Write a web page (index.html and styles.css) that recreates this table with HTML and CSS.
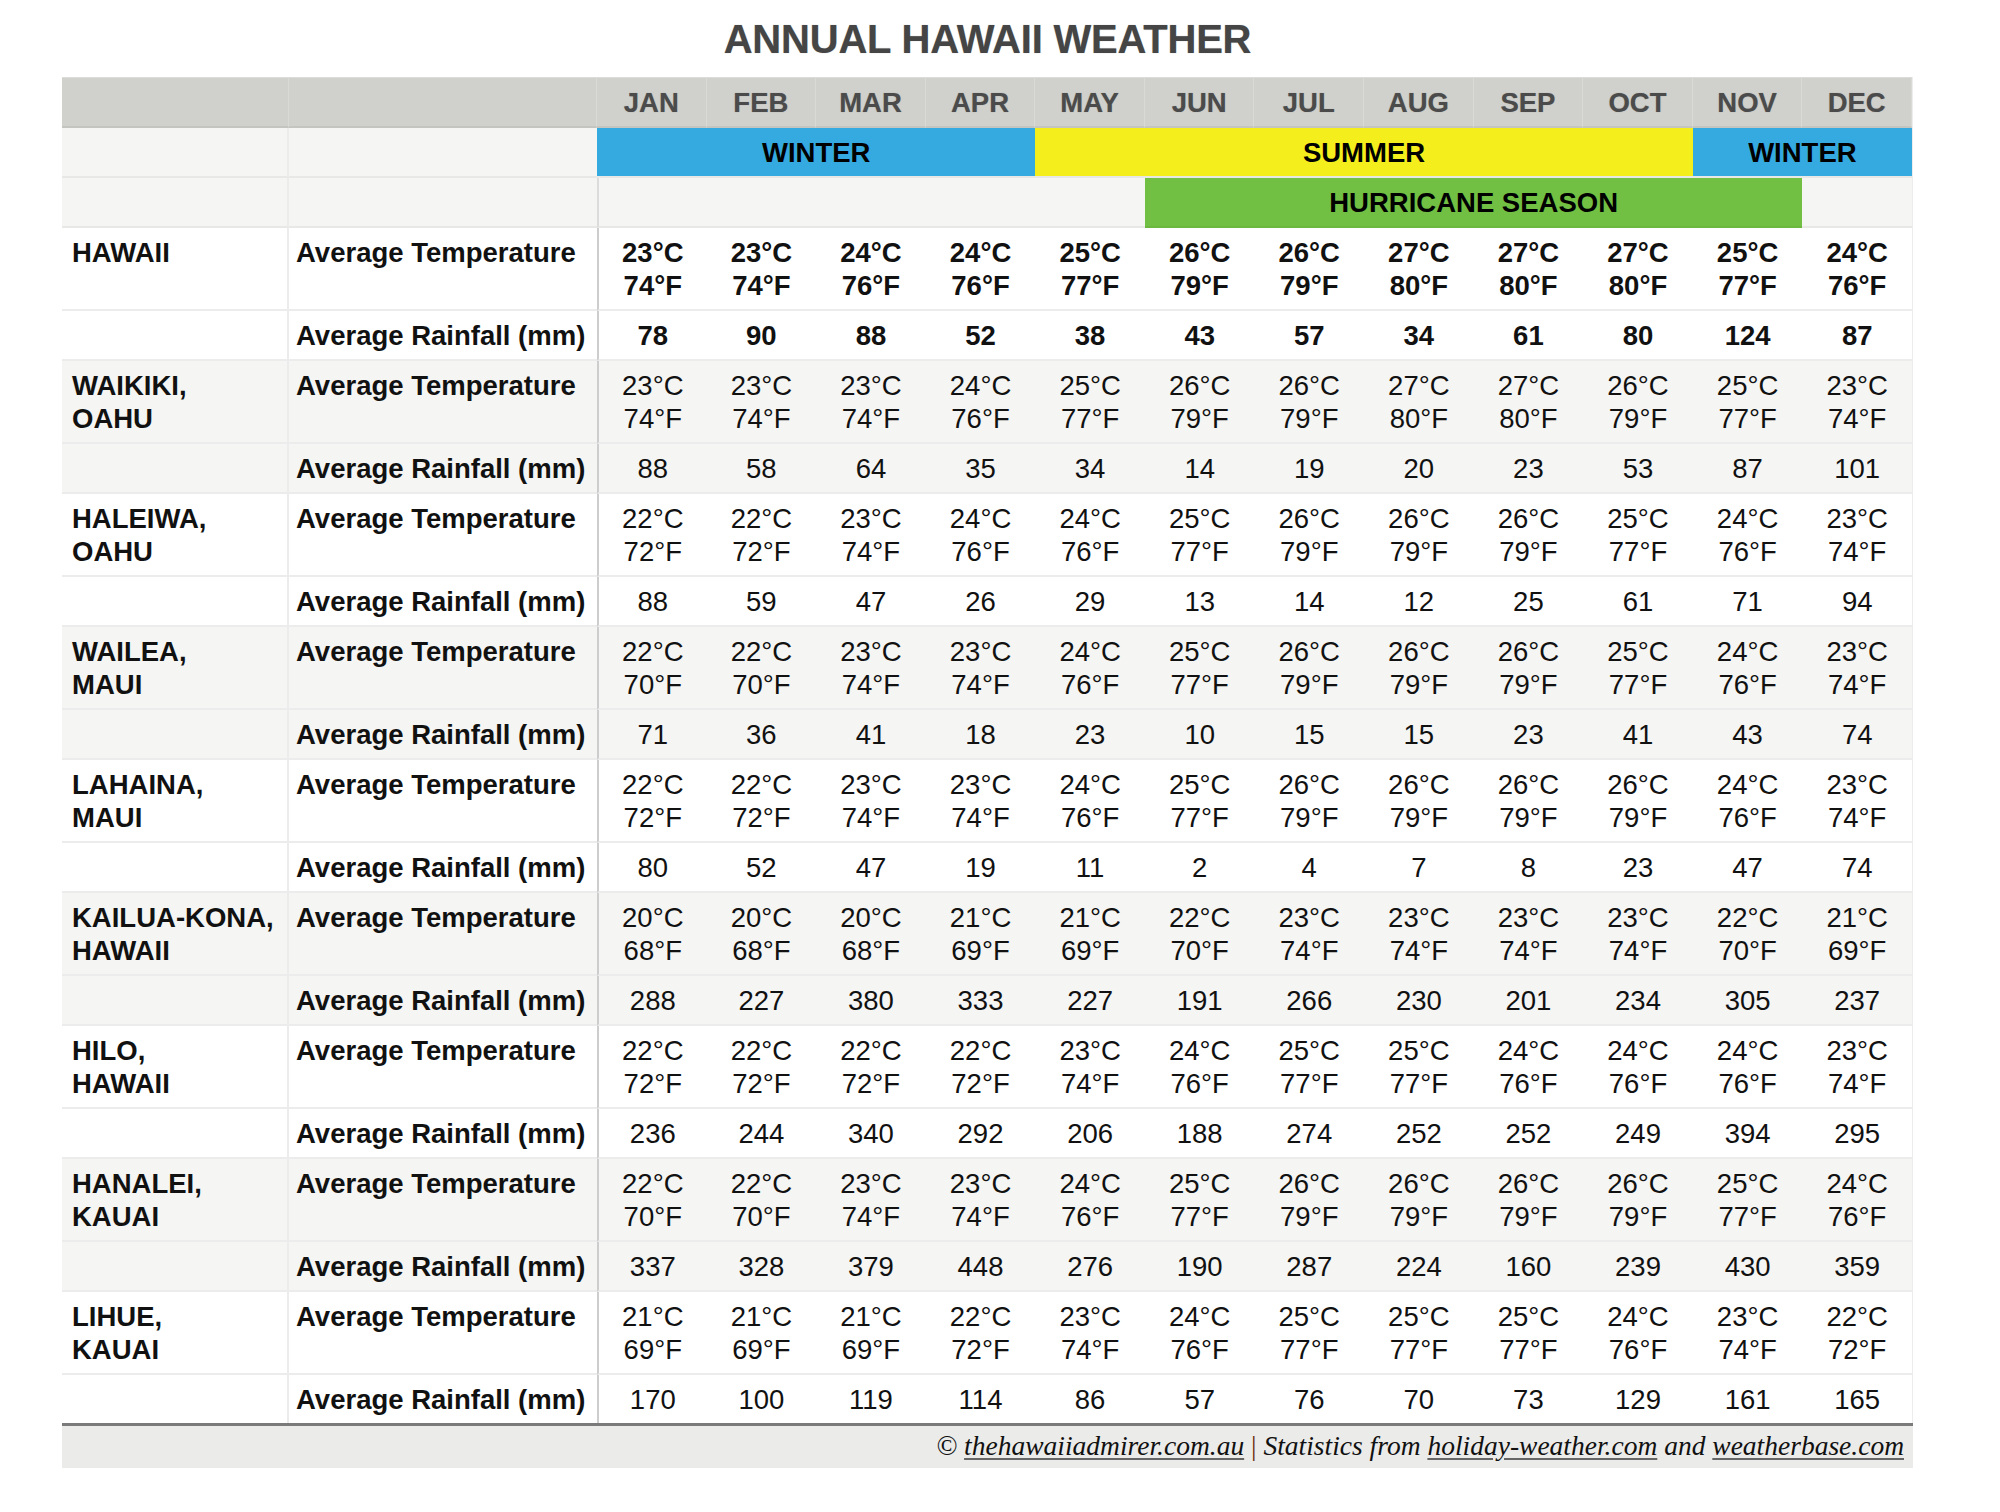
FILE: index.html
```html
<!DOCTYPE html>
<html lang="en">
<head>
<meta charset="utf-8">
<title>Annual Hawaii Weather</title>
<link rel="stylesheet" href="styles.css">
</head>
<body>
<div class="page">
  <h1 class="title">ANNUAL HAWAII WEATHER</h1>
  <table class="weather">
    <colgroup>
      <col class="c-loc"><col class="c-metric">
      <col><col><col><col><col><col><col><col><col><col><col><col>
    </colgroup>
    <thead>
      <tr class="months">
        <th></th><th></th>
        <th class="first">JAN</th><th>FEB</th><th>MAR</th><th>APR</th><th>MAY</th><th>JUN</th>
        <th>JUL</th><th>AUG</th><th>SEP</th><th>OCT</th><th>NOV</th><th>DEC</th>
      </tr>
      <tr class="band">
        <td class="loc"></td><td class="metric"></td>
        <td class="season winter" colspan="4">WINTER</td>
        <td class="season summer" colspan="6">SUMMER</td>
        <td class="season winter" colspan="2">WINTER</td>
      </tr>
      <tr class="band">
        <td class="loc"></td><td class="metric"></td>
        <td class="blank" colspan="5"></td>
        <td class="season hurricane" colspan="6">HURRICANE SEASON</td>
        <td class="blank end"></td>
      </tr>
    </thead>
    <tbody class="block strong">
      <tr>
        <td class="loc">HAWAII</td><td class="metric">Average Temperature</td>
        <td class="first">23°C<br>74°F</td><td>23°C<br>74°F</td><td>24°C<br>76°F</td><td>24°C<br>76°F</td><td>25°C<br>77°F</td><td>26°C<br>79°F</td><td>26°C<br>79°F</td><td>27°C<br>80°F</td><td>27°C<br>80°F</td><td>27°C<br>80°F</td><td>25°C<br>77°F</td><td>24°C<br>76°F</td>
      </tr>
      <tr>
        <td class="loc"></td><td class="metric">Average Rainfall (mm)</td>
        <td class="first">78</td><td>90</td><td>88</td><td>52</td><td>38</td><td>43</td><td>57</td><td>34</td><td>61</td><td>80</td><td>124</td><td>87</td>
      </tr>
    </tbody>
    <tbody class="block alt">
      <tr>
        <td class="loc">WAIKIKI,<br>OAHU</td><td class="metric">Average Temperature</td>
        <td class="first">23°C<br>74°F</td><td>23°C<br>74°F</td><td>23°C<br>74°F</td><td>24°C<br>76°F</td><td>25°C<br>77°F</td><td>26°C<br>79°F</td><td>26°C<br>79°F</td><td>27°C<br>80°F</td><td>27°C<br>80°F</td><td>26°C<br>79°F</td><td>25°C<br>77°F</td><td>23°C<br>74°F</td>
      </tr>
      <tr>
        <td class="loc"></td><td class="metric">Average Rainfall (mm)</td>
        <td class="first">88</td><td>58</td><td>64</td><td>35</td><td>34</td><td>14</td><td>19</td><td>20</td><td>23</td><td>53</td><td>87</td><td>101</td>
      </tr>
    </tbody>
    <tbody class="block">
      <tr>
        <td class="loc">HALEIWA,<br>OAHU</td><td class="metric">Average Temperature</td>
        <td class="first">22°C<br>72°F</td><td>22°C<br>72°F</td><td>23°C<br>74°F</td><td>24°C<br>76°F</td><td>24°C<br>76°F</td><td>25°C<br>77°F</td><td>26°C<br>79°F</td><td>26°C<br>79°F</td><td>26°C<br>79°F</td><td>25°C<br>77°F</td><td>24°C<br>76°F</td><td>23°C<br>74°F</td>
      </tr>
      <tr>
        <td class="loc"></td><td class="metric">Average Rainfall (mm)</td>
        <td class="first">88</td><td>59</td><td>47</td><td>26</td><td>29</td><td>13</td><td>14</td><td>12</td><td>25</td><td>61</td><td>71</td><td>94</td>
      </tr>
    </tbody>
    <tbody class="block alt">
      <tr>
        <td class="loc">WAILEA,<br>MAUI</td><td class="metric">Average Temperature</td>
        <td class="first">22°C<br>70°F</td><td>22°C<br>70°F</td><td>23°C<br>74°F</td><td>23°C<br>74°F</td><td>24°C<br>76°F</td><td>25°C<br>77°F</td><td>26°C<br>79°F</td><td>26°C<br>79°F</td><td>26°C<br>79°F</td><td>25°C<br>77°F</td><td>24°C<br>76°F</td><td>23°C<br>74°F</td>
      </tr>
      <tr>
        <td class="loc"></td><td class="metric">Average Rainfall (mm)</td>
        <td class="first">71</td><td>36</td><td>41</td><td>18</td><td>23</td><td>10</td><td>15</td><td>15</td><td>23</td><td>41</td><td>43</td><td>74</td>
      </tr>
    </tbody>
    <tbody class="block">
      <tr>
        <td class="loc">LAHAINA,<br>MAUI</td><td class="metric">Average Temperature</td>
        <td class="first">22°C<br>72°F</td><td>22°C<br>72°F</td><td>23°C<br>74°F</td><td>23°C<br>74°F</td><td>24°C<br>76°F</td><td>25°C<br>77°F</td><td>26°C<br>79°F</td><td>26°C<br>79°F</td><td>26°C<br>79°F</td><td>26°C<br>79°F</td><td>24°C<br>76°F</td><td>23°C<br>74°F</td>
      </tr>
      <tr>
        <td class="loc"></td><td class="metric">Average Rainfall (mm)</td>
        <td class="first">80</td><td>52</td><td>47</td><td>19</td><td>11</td><td>2</td><td>4</td><td>7</td><td>8</td><td>23</td><td>47</td><td>74</td>
      </tr>
    </tbody>
    <tbody class="block alt">
      <tr>
        <td class="loc">KAILUA-KONA,<br>HAWAII</td><td class="metric">Average Temperature</td>
        <td class="first">20°C<br>68°F</td><td>20°C<br>68°F</td><td>20°C<br>68°F</td><td>21°C<br>69°F</td><td>21°C<br>69°F</td><td>22°C<br>70°F</td><td>23°C<br>74°F</td><td>23°C<br>74°F</td><td>23°C<br>74°F</td><td>23°C<br>74°F</td><td>22°C<br>70°F</td><td>21°C<br>69°F</td>
      </tr>
      <tr>
        <td class="loc"></td><td class="metric">Average Rainfall (mm)</td>
        <td class="first">288</td><td>227</td><td>380</td><td>333</td><td>227</td><td>191</td><td>266</td><td>230</td><td>201</td><td>234</td><td>305</td><td>237</td>
      </tr>
    </tbody>
    <tbody class="block">
      <tr>
        <td class="loc">HILO,<br>HAWAII</td><td class="metric">Average Temperature</td>
        <td class="first">22°C<br>72°F</td><td>22°C<br>72°F</td><td>22°C<br>72°F</td><td>22°C<br>72°F</td><td>23°C<br>74°F</td><td>24°C<br>76°F</td><td>25°C<br>77°F</td><td>25°C<br>77°F</td><td>24°C<br>76°F</td><td>24°C<br>76°F</td><td>24°C<br>76°F</td><td>23°C<br>74°F</td>
      </tr>
      <tr>
        <td class="loc"></td><td class="metric">Average Rainfall (mm)</td>
        <td class="first">236</td><td>244</td><td>340</td><td>292</td><td>206</td><td>188</td><td>274</td><td>252</td><td>252</td><td>249</td><td>394</td><td>295</td>
      </tr>
    </tbody>
    <tbody class="block alt">
      <tr>
        <td class="loc">HANALEI,<br>KAUAI</td><td class="metric">Average Temperature</td>
        <td class="first">22°C<br>70°F</td><td>22°C<br>70°F</td><td>23°C<br>74°F</td><td>23°C<br>74°F</td><td>24°C<br>76°F</td><td>25°C<br>77°F</td><td>26°C<br>79°F</td><td>26°C<br>79°F</td><td>26°C<br>79°F</td><td>26°C<br>79°F</td><td>25°C<br>77°F</td><td>24°C<br>76°F</td>
      </tr>
      <tr>
        <td class="loc"></td><td class="metric">Average Rainfall (mm)</td>
        <td class="first">337</td><td>328</td><td>379</td><td>448</td><td>276</td><td>190</td><td>287</td><td>224</td><td>160</td><td>239</td><td>430</td><td>359</td>
      </tr>
    </tbody>
    <tbody class="block last">
      <tr>
        <td class="loc">LIHUE,<br>KAUAI</td><td class="metric">Average Temperature</td>
        <td class="first">21°C<br>69°F</td><td>21°C<br>69°F</td><td>21°C<br>69°F</td><td>22°C<br>72°F</td><td>23°C<br>74°F</td><td>24°C<br>76°F</td><td>25°C<br>77°F</td><td>25°C<br>77°F</td><td>25°C<br>77°F</td><td>24°C<br>76°F</td><td>23°C<br>74°F</td><td>22°C<br>72°F</td>
      </tr>
      <tr>
        <td class="loc"></td><td class="metric">Average Rainfall (mm)</td>
        <td class="first">170</td><td>100</td><td>119</td><td>114</td><td>86</td><td>57</td><td>76</td><td>70</td><td>73</td><td>129</td><td>161</td><td>165</td>
      </tr>
    </tbody>
  </table>
  <div class="credit">© <a href="#">thehawaiiadmirer.com.au</a> <span class="sep">|</span> Statistics from <a href="#">holiday-weather.com</a> and <a href="#">weatherbase.com</a></div>
</div>
</body>
</html>
```
FILE: styles.css
```css
* { box-sizing: border-box; }

body {
  margin: 0;
  background: #ffffff;
  font-family: "Liberation Sans", Arial, sans-serif;
  color: #111111;
}

.page {
  width: 1851px;
  margin-left: 62px;
}

.title {
  margin: 0;
  height: 77px;
  padding-top: 16px;
  font-size: 40px;
  line-height: 46px;
  font-weight: bold;
  text-align: center;
  color: #454545;
  letter-spacing: -0.2px;
  text-shadow: 0 0 1px rgba(0, 0, 0, 0.35);
}

.weather {
  width: 1851px;
  table-layout: fixed;
  border-collapse: separate;
  border-spacing: 0;
  font-size: 27.5px;
  line-height: 33px;
  border-right: 1px solid #ececec;
}

.c-loc { width: 227px; }
.c-metric { width: 308px; }

.weather th,
.weather td {
  padding: 8px 0 7px;
  border-bottom: 2px solid #ececec;
  vertical-align: top;
  text-align: center;
  font-weight: normal;
}

.months th {
  background: #d0d0cc;
  color: #4b4b4b;
  font-weight: bold;
  border-bottom: 2px solid #c4c4c0;
  border-right: 1px solid #d9d9d5;
  border-top: 1px solid #dcdcd8;
  text-shadow: 0 0 1px rgba(0, 0, 0, 0.3);
}

.band td {
  background: #f5f5f3;
  border-bottom: 2px solid #e8e8e6;
}

.band .season {
  font-weight: bold;
  color: #000000;
}

.band .winter { background: #34aae1; }
.band .summer { background: #f5ee1d; }
.band .hurricane { background: #72c043; border-bottom-color: #6cb83e; }
.band .blank { border-left: 2px solid #dcdcdc; }
.band .blank.end { border-left: none; }

.weather .loc {
  text-align: left;
  padding-left: 10px;
  font-weight: bold;
  border-right: 2px solid #ececec;
}

.weather .metric {
  text-align: left;
  padding-left: 7px;
  font-weight: bold;
  white-space: nowrap;
}

.block td.first {
  border-left: 2px solid #cdcdcd;
}

.block.alt td {
  background: #f5f5f3;
}

.block.strong td {
  font-weight: bold;
}

.block.last tr:last-child td {
  border-bottom: none;
}

.credit {
  height: 45px;
  padding: 3px 9px 0 0;
  background: #ebebea;
  border-top: 3px solid #7a7a7a;
  text-align: right;
  font-family: "Liberation Serif", "Times New Roman", serif;
  font-style: italic;
  font-size: 27.5px;
  line-height: 33px;
  color: #111111;
}

.credit a {
  color: inherit;
  text-decoration: underline;
  text-decoration-color: #666666;
  text-underline-offset: 3px;
}

.credit .sep {
  font-style: normal;
  color: #6a2e0c;
}
```
